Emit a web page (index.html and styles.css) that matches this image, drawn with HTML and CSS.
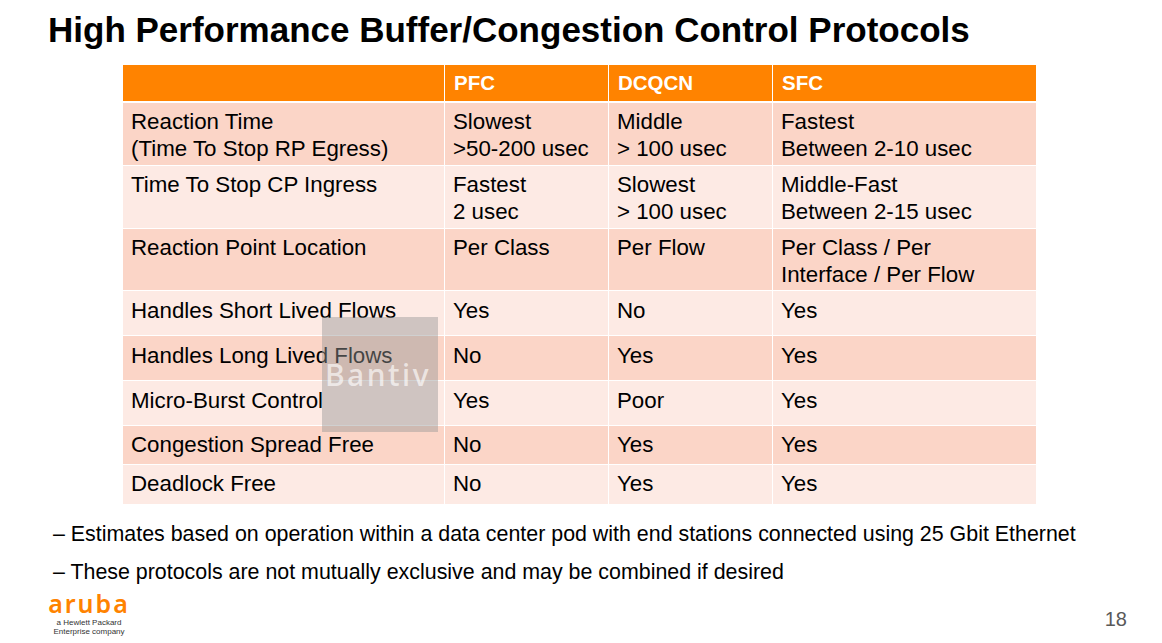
FILE: index.html
```html
<!DOCTYPE html>
<html lang="en">
<head>
<meta charset="utf-8">
<title>High Performance Buffer/Congestion Control Protocols</title>
<link rel="stylesheet" href="styles.css">
</head>
<body>
<div class="slide">
  <h1 class="title">High Performance Buffer/Congestion Control Protocols</h1>

  <div class="table">
    <div class="thead">
      <div class="th"></div>
      <div class="th">PFC</div>
      <div class="th">DCQCN</div>
      <div class="th">SFC</div>
    </div>
    <div class="tbody">
      <div class="td dark">Reaction Time<br>(Time To Stop RP Egress)</div>
      <div class="td dark">Slowest<br>&gt;50-200 usec</div>
      <div class="td dark">Middle<br>&gt; 100 usec</div>
      <div class="td dark">Fastest<br>Between 2-10 usec</div>

      <div class="td light">Time To Stop CP Ingress</div>
      <div class="td light">Fastest<br>2 usec</div>
      <div class="td light">Slowest<br>&gt; 100 usec</div>
      <div class="td light">Middle-Fast<br>Between 2-15 usec</div>

      <div class="td dark">Reaction Point Location</div>
      <div class="td dark">Per Class</div>
      <div class="td dark">Per Flow</div>
      <div class="td dark">Per Class / Per<br>Interface / Per Flow</div>

      <div class="td light mid">Handles Short Lived Flows</div>
      <div class="td light mid">Yes</div>
      <div class="td light mid">No</div>
      <div class="td light mid">Yes</div>

      <div class="td dark mid">Handles Long Lived Flows</div>
      <div class="td dark mid">No</div>
      <div class="td dark mid">Yes</div>
      <div class="td dark mid">Yes</div>

      <div class="td light mid">Micro-Burst Control</div>
      <div class="td light mid">Yes</div>
      <div class="td light mid">Poor</div>
      <div class="td light mid">Yes</div>

      <div class="td dark">Congestion Spread Free</div>
      <div class="td dark">No</div>
      <div class="td dark">Yes</div>
      <div class="td dark">Yes</div>

      <div class="td light">Deadlock Free</div>
      <div class="td light">No</div>
      <div class="td light">Yes</div>
      <div class="td light">Yes</div>
    </div>
  </div>

  <ul class="notes">
    <li>– Estimates based on operation within a data center pod with end stations connected using 25 Gbit Ethernet</li>
    <li>– These protocols are not mutually exclusive and may be combined if desired</li>
  </ul>

  <footer class="footer">
    <div class="logo">
      <div class="logo-word">aruba</div>
      <div class="logo-sub">a Hewlett Packard<br>Enterprise company</div>
    </div>
    <div class="page-num">18</div>
  </footer>

  <div class="watermark"><span class="wm-text">Bantiv</span></div>
</div>
</body>
</html>
```

FILE: styles.css
```css
* { box-sizing: border-box; }

html, body {
  margin: 0;
  padding: 0;
  background: #ffffff;
}

body {
  font-family: "Liberation Sans", Arial, sans-serif;
  color: #000;
}

.slide {
  position: relative;
  width: 1162px;
  height: 643px;
  display: flex;
  flex-direction: column;
  overflow: hidden;
}

.title {
  margin: 0;
  padding: 10px 0 0 48px;
  font-size: 35px;
  line-height: 40px;
  font-weight: 700;
}

.table {
  margin: 15px 0 0 123px;
  width: 913px;
}

.thead,
.tbody {
  display: grid;
  grid-template-columns: 321px 163px 163px 263px;
  column-gap: 1px;
  background: #ffffff;
}

.thead {
  height: 36px;
  margin-bottom: 2px;
}

.tbody {
  row-gap: 1px;
  grid-template-rows: 62px 62px 61px 44px 44px 44px 38px 39px;
}

.th {
  background: #ff8300;
  color: #ffffff;
  font-weight: 700;
  font-size: 20.5px;
  display: flex;
  align-items: center;
  padding: 0 9px;
}

.td {
  font-size: 22.3px;
  line-height: 27px;
  padding: 5px 8px 0 8px;
}

.td.mid { padding-top: 6px; }

.dark { background: #fbd5c7; }
.light { background: #fdeae4; }

.notes {
  list-style: none;
  margin: 18px 0 0 53px;
  padding: 0;
  font-size: 21.4px;
  line-height: 25px;
}

.notes li + li {
  margin-top: 13px;
}

.footer {
  margin-top: auto;
  display: flex;
  justify-content: space-between;
  align-items: flex-start;
  padding: 0 35px 0 44px;
  height: 58px;
}

.logo {
  display: flex;
  flex-direction: column;
  align-items: center;
  width: 90px;
}

.logo-word {
  font-family: "Noto Sans", sans-serif;
  font-weight: 600;
  font-size: 25px;
  line-height: 22px;
  height: 22px;
  letter-spacing: 2px;
  color: #ff8300;
  margin-top: 7px;
}

.logo-sub {
  font-family: "Liberation Sans", Arial, sans-serif;
  font-size: 8px;
  line-height: 9px;
  color: #333;
  text-align: center;
  margin-top: 4px;
}

.page-num {
  font-size: 20px;
  line-height: 24px;
  color: #595959;
  margin-top: 22px;
}

.watermark {
  position: absolute;
  left: 322px;
  top: 317px;
  width: 116px;
  height: 115px;
  background: rgba(150, 150, 150, 0.45);
  overflow: hidden;
  padding: 45px 0 0 3px;
}

.wm-text {
  display: block;
  font-family: "Noto Sans", sans-serif;
  font-weight: 500;
  font-size: 30px;
  line-height: 26px;
  letter-spacing: 2.5px;
  color: rgba(255, 255, 255, 0.65);
  white-space: nowrap;
}
```
